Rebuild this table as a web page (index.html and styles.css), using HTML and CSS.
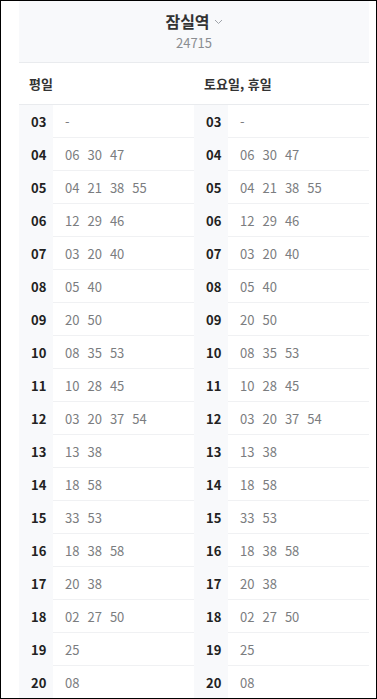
FILE: index.html
```html
<!DOCTYPE html>
<html lang="ko">
<head>
<meta charset="utf-8">
<link rel="stylesheet" href="styles.css">
</head>
<body>
<div class="frame">
  <div class="page">
    <header class="station">
      <div class="title">잠실역<svg class="chev" width="9" height="6" viewBox="0 0 9 6"><path d="M1 1l3.5 3.5L8 1" fill="none" stroke="#a0a4aa" stroke-width="1"/></svg></div>
      <div class="code">24715</div>
    </header>
    <div class="cols">
      <section class="col">
        <div class="col-head">평일</div>
        <div class="row"><div class="hr">03</div><div class="mins"><span>-</span></div></div>
        <div class="row"><div class="hr">04</div><div class="mins"><span>06</span><span>30</span><span>47</span></div></div>
        <div class="row"><div class="hr">05</div><div class="mins"><span>04</span><span>21</span><span>38</span><span>55</span></div></div>
        <div class="row"><div class="hr">06</div><div class="mins"><span>12</span><span>29</span><span>46</span></div></div>
        <div class="row"><div class="hr">07</div><div class="mins"><span>03</span><span>20</span><span>40</span></div></div>
        <div class="row"><div class="hr">08</div><div class="mins"><span>05</span><span>40</span></div></div>
        <div class="row"><div class="hr">09</div><div class="mins"><span>20</span><span>50</span></div></div>
        <div class="row"><div class="hr">10</div><div class="mins"><span>08</span><span>35</span><span>53</span></div></div>
        <div class="row"><div class="hr">11</div><div class="mins"><span>10</span><span>28</span><span>45</span></div></div>
        <div class="row"><div class="hr">12</div><div class="mins"><span>03</span><span>20</span><span>37</span><span>54</span></div></div>
        <div class="row"><div class="hr">13</div><div class="mins"><span>13</span><span>38</span></div></div>
        <div class="row"><div class="hr">14</div><div class="mins"><span>18</span><span>58</span></div></div>
        <div class="row"><div class="hr">15</div><div class="mins"><span>33</span><span>53</span></div></div>
        <div class="row"><div class="hr">16</div><div class="mins"><span>18</span><span>38</span><span>58</span></div></div>
        <div class="row"><div class="hr">17</div><div class="mins"><span>20</span><span>38</span></div></div>
        <div class="row"><div class="hr">18</div><div class="mins"><span>02</span><span>27</span><span>50</span></div></div>
        <div class="row"><div class="hr">19</div><div class="mins"><span>25</span></div></div>
        <div class="row"><div class="hr">20</div><div class="mins"><span>08</span></div></div>
      </section>
      <section class="col">
        <div class="col-head">토요일, 휴일</div>
        <div class="row"><div class="hr">03</div><div class="mins"><span>-</span></div></div>
        <div class="row"><div class="hr">04</div><div class="mins"><span>06</span><span>30</span><span>47</span></div></div>
        <div class="row"><div class="hr">05</div><div class="mins"><span>04</span><span>21</span><span>38</span><span>55</span></div></div>
        <div class="row"><div class="hr">06</div><div class="mins"><span>12</span><span>29</span><span>46</span></div></div>
        <div class="row"><div class="hr">07</div><div class="mins"><span>03</span><span>20</span><span>40</span></div></div>
        <div class="row"><div class="hr">08</div><div class="mins"><span>05</span><span>40</span></div></div>
        <div class="row"><div class="hr">09</div><div class="mins"><span>20</span><span>50</span></div></div>
        <div class="row"><div class="hr">10</div><div class="mins"><span>08</span><span>35</span><span>53</span></div></div>
        <div class="row"><div class="hr">11</div><div class="mins"><span>10</span><span>28</span><span>45</span></div></div>
        <div class="row"><div class="hr">12</div><div class="mins"><span>03</span><span>20</span><span>37</span><span>54</span></div></div>
        <div class="row"><div class="hr">13</div><div class="mins"><span>13</span><span>38</span></div></div>
        <div class="row"><div class="hr">14</div><div class="mins"><span>18</span><span>58</span></div></div>
        <div class="row"><div class="hr">15</div><div class="mins"><span>33</span><span>53</span></div></div>
        <div class="row"><div class="hr">16</div><div class="mins"><span>18</span><span>38</span><span>58</span></div></div>
        <div class="row"><div class="hr">17</div><div class="mins"><span>20</span><span>38</span></div></div>
        <div class="row"><div class="hr">18</div><div class="mins"><span>02</span><span>27</span><span>50</span></div></div>
        <div class="row"><div class="hr">19</div><div class="mins"><span>25</span></div></div>
        <div class="row"><div class="hr">20</div><div class="mins"><span>08</span></div></div>
      </section>
    </div>
  </div>
</div>
</body>
</html>
```

FILE: styles.css
```css
html, body {
  margin: 0;
  padding: 0;
  background: #fff;
}
body {
  font-family: "Noto Sans CJK KR", "Noto Sans", sans-serif;
  color: #222;
}
.frame {
  box-sizing: border-box;
  width: 377px;
  height: 699px;
  border: 1px solid #000;
  overflow: hidden;
  padding-left: 18px;
}
.page {
  width: 350px;
}
.station {
  background: #f8f9fb;
  height: 62px;
  box-sizing: border-box;
  padding-top: 9px;
  text-align: center;
  border-bottom: 1px solid #e9ebee;
}
.title {
  font-size: 16px;
  font-weight: 700;
  line-height: 23px;
  color: #333;
}
.chev {
  margin-left: 4px;
  vertical-align: 3px;
}
.code {
  font-size: 13px;
  line-height: 19px;
  color: #8a8d91;
}
.cols {
  display: flex;
}
.col {
  flex: 1 1 0;
}
.col-head {
  height: 42px;
  box-sizing: border-box;
  padding-left: 10px;
  display: flex;
  align-items: center;
  font-size: 13px;
  font-weight: 700;
  color: #333;
  border-bottom: 1px solid #e9ebee;
}
.row {
  display: flex;
  height: 33px;
}
.hr {
  width: 34px;
  box-sizing: border-box;
  padding-left: 12px;
  background: #f8f9fb;
  display: flex;
  align-items: center;
  font-size: 13px;
  font-weight: 700;
  color: #222;
}
.mins {
  flex: 1;
  box-sizing: border-box;
  padding-left: 12px;
  display: flex;
  align-items: center;
  gap: 8px;
  font-size: 13px;
  color: #7b7d80;
  border-bottom: 1px solid #f0f1f3;
}
```
